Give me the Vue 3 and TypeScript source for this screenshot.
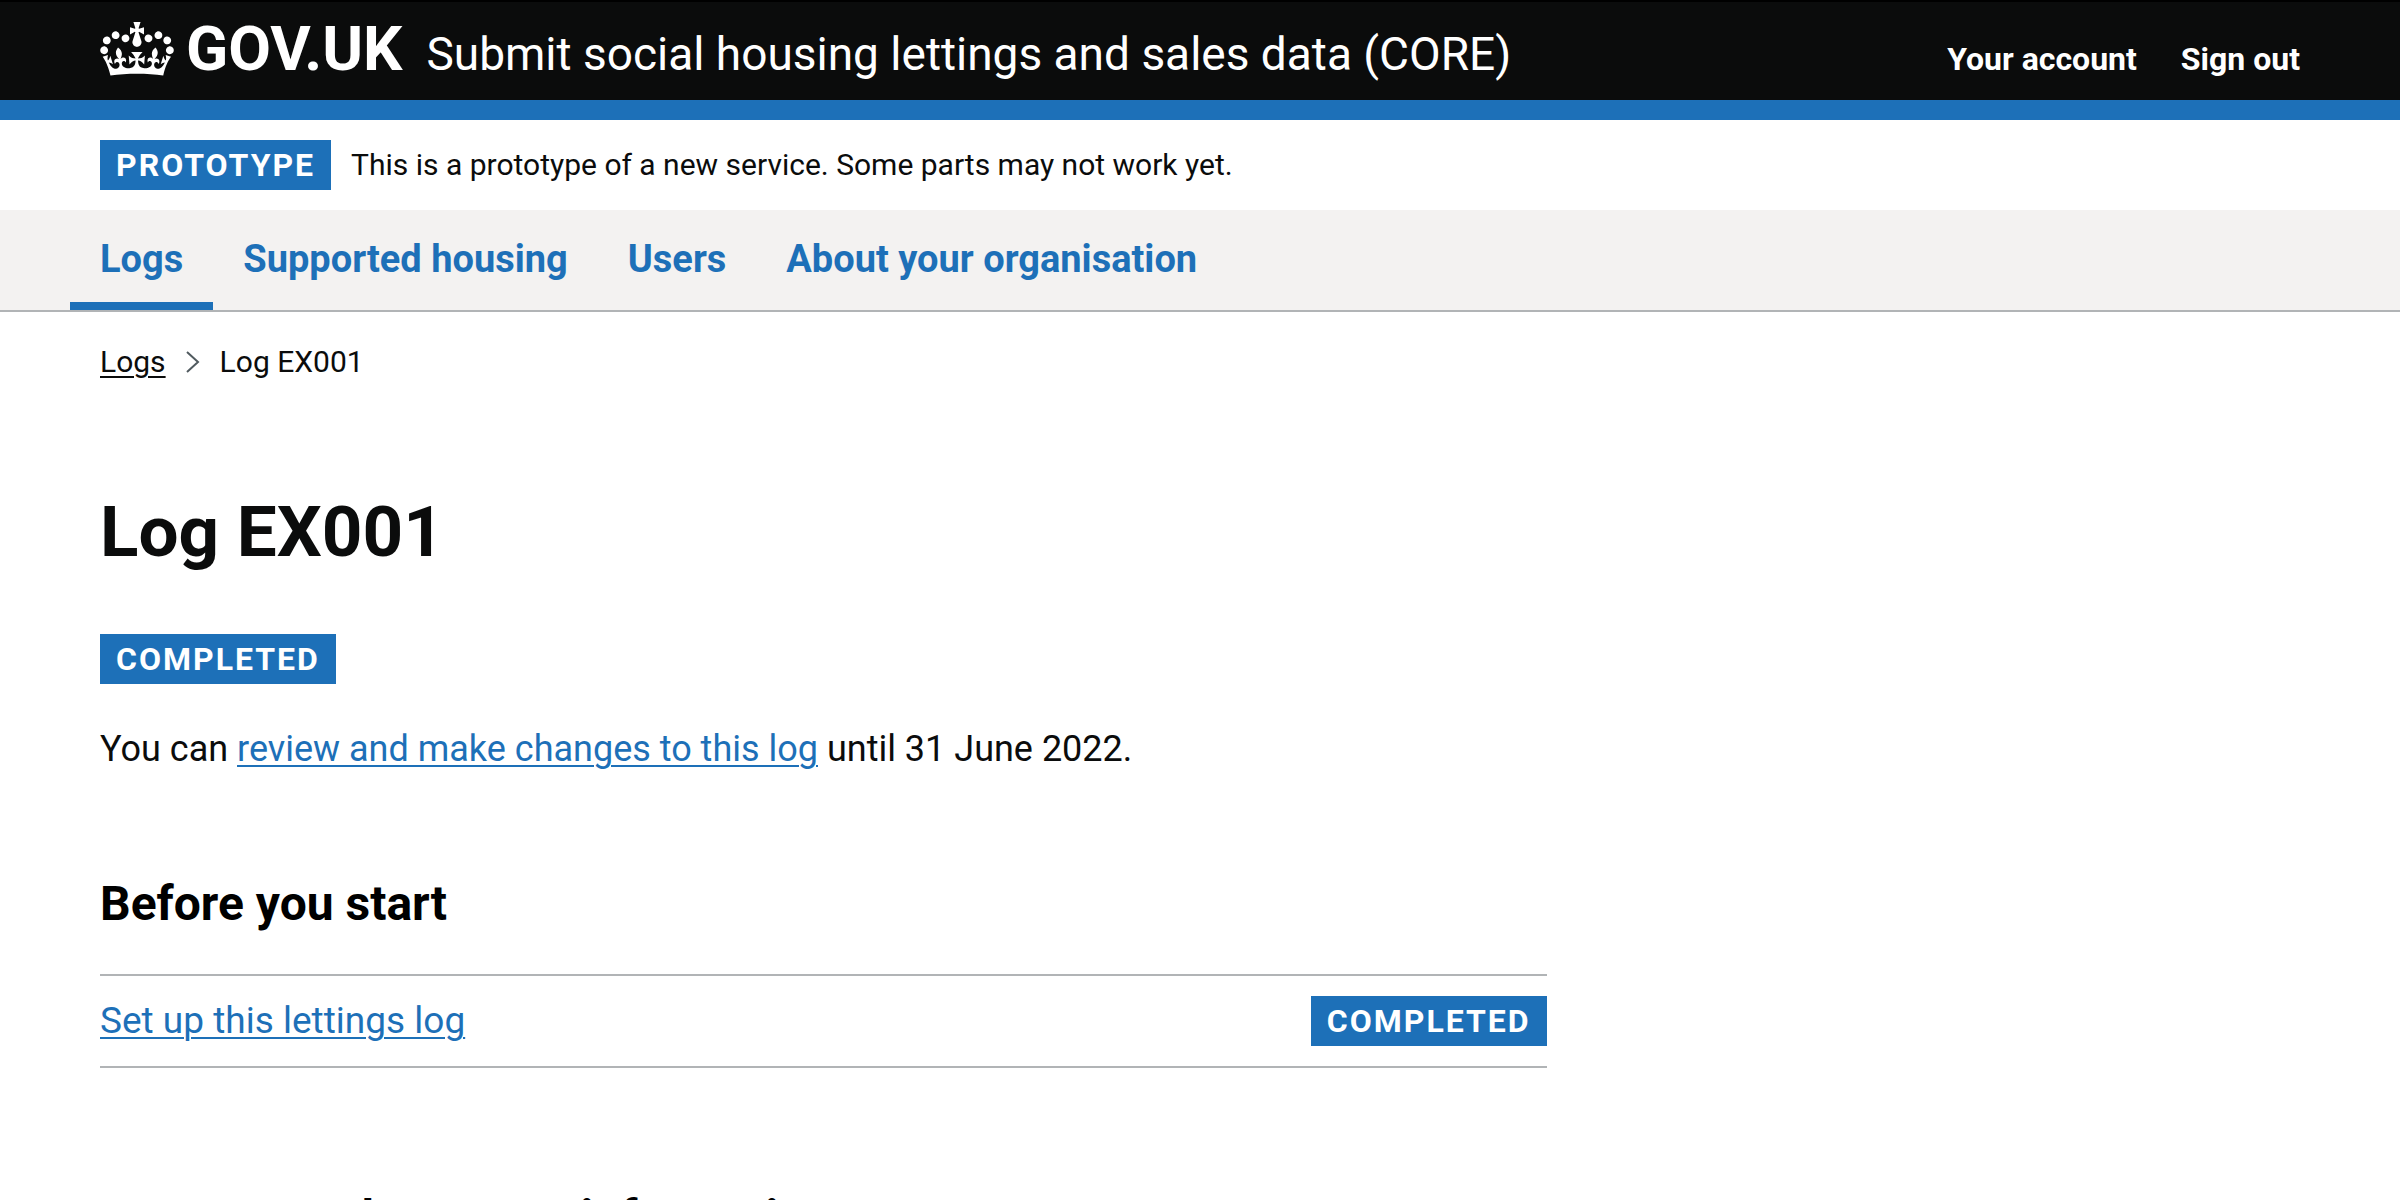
<script setup lang="ts">
interface NavItem {
  label: string
  href: string
  current?: boolean
}

interface Section {
  title: string
  tasks: { label: string; href: string; status: string }[]
}

const accountLinks: NavItem[] = [
  { label: 'Your account', href: '#account' },
  { label: 'Sign out', href: '#sign-out' },
]

const navItems: NavItem[] = [
  { label: 'Logs', href: '#logs', current: true },
  { label: 'Supported housing', href: '#supported-housing' },
  { label: 'Users', href: '#users' },
  { label: 'About your organisation', href: '#organisation' },
]

const sections: Section[] = [
  {
    title: 'Before you start',
    tasks: [{ label: 'Set up this lettings log', href: '#setup', status: 'Completed' }],
  },
  { title: 'Tenancy and property information', tasks: [] },
]
</script>

<template>
  <div class="page">
    <header class="header">
      <div class="header-inner">
        <a class="logo" href="#home">
          <svg class="crown" viewBox="0 0 132 97" aria-hidden="true">
            <path
              fill="currentColor"
              d="M25 30.2c3.5 1.5 7.7-.2 9.1-3.7 1.5-3.6-.2-7.8-3.9-9.2-3.6-1.4-7.6.3-9.1 3.9-1.4 3.5.3 7.5 3.9 9zM9 39.5c3.6 1.5 7.8-.2 9.2-3.7 1.5-3.6-.2-7.8-3.9-9.1-3.6-1.5-7.6.2-9.1 3.8-1.4 3.5.3 7.5 3.8 9zM4.4 57.2c3.5 1.5 7.7-.2 9.1-3.8 1.5-3.6-.2-7.7-3.9-9.1-3.5-1.5-7.6.3-9.1 3.8-1.4 3.5.3 7.6 3.9 9.1zm38.3-21.4c3.5 1.5 7.7-.2 9.1-3.8 1.5-3.6-.2-7.7-3.9-9.1-3.6-1.5-7.6.3-9.1 3.8-1.3 3.6.4 7.7 3.9 9.1zm64.4-5.6c-3.6 1.5-7.8-.2-9.1-3.7-1.5-3.6.2-7.8 3.8-9.2 3.6-1.4 7.7.3 9.2 3.9 1.3 3.5-.4 7.5-3.9 9zm15.9 9.3c-3.6 1.5-7.7-.2-9.1-3.7-1.5-3.6.2-7.8 3.7-9.1 3.6-1.5 7.7.2 9.2 3.8 1.5 3.5-.3 7.5-3.8 9zm4.7 17.7c-3.6 1.5-7.8-.2-9.2-3.8-1.5-3.6.2-7.7 3.9-9.1 3.6-1.5 7.7.3 9.2 3.8 1.3 3.5-.4 7.6-3.9 9.1zM89.3 35.8c-3.6 1.5-7.8-.2-9.2-3.8-1.4-3.6.2-7.7 3.9-9.1 3.6-1.5 7.7.3 9.2 3.8 1.4 3.6-.3 7.7-3.9 9.1zM69.7 17.7l8.9 4.7V9.3l-8.9 2.8c-.2-.3-.5-.6-.9-.9L72.4 0H59.6l3.5 11.2c-.3.3-.6.5-.9.9l-8.8-2.8v13.1l8.8-4.7c.3.3.6.7.9.9l-5 15.4v.1c-.2.8-.4 1.6-.4 2.4 0 4.1 3.1 7.5 7 8.1h.2c.3 0 .7.1 1 .1.4 0 .7 0 1-.1h.2c4-.6 7.1-4.1 7.1-8.1 0-.8-.1-1.7-.4-2.4V34l-5.1-15.4c.4-.2.7-.6 1-.9zM66 92.8c16.9 0 32.8 1.1 47.1 3.2 4-16.9 8.9-26.7 14-33.5l-9.6-3.4c1 4.9 1.1 7.2 0 10.2-1.5-1.4-3-4.3-4.2-8.7L108.6 76c2.8-2 5-3.2 7.5-3.3-4.4 9.4-10 11.9-13.6 11.2-4.3-.8-6.3-4.6-5.6-7.9 1-4.7 5.7-5.9 8-.5 4.3-8.7-3-11.4-7.6-8.8 7.1-7.2 7.9-13.5 2.1-21.1-8 6.1-8.1 12.3-4.5 20.8-4.7-5.4-12.1-2.5-9.5 6.2 3.4-5.2 7.9-2 7.2 3.1-.6 4.3-6.4 7.8-13.5 7.2-10.3-.9-10.9-8-11.2-13.8 2.5-.5 7.1 1.8 11 7.3L80.2 60c-4.1 4.4-8 5.3-12.3 5.4 1.4-4.4 8-11.6 8-11.6H55.5s6.4 7.2 7.9 11.6c-4.2-.1-8-1-12.3-5.4l1.4 16.4c3.9-5.5 8.5-7.7 10.9-7.3-.3 5.8-.9 12.8-11.1 13.8-7.2.6-12.9-2.9-13.5-7.2-.7-5 3.8-8.3 7.1-3.1 2.7-8.7-4.6-11.6-9.4-6.2 3.7-8.5 3.6-14.7-4.6-20.8-5.8 7.6-5 13.9 2.2 21.1-4.7-2.6-11.9.1-7.7 8.8 2.3-5.5 7.1-4.2 8.1.5.7 3.3-1.3 7.1-5.7 7.9-3.5.7-9-1.8-13.5-11.2 2.5.1 4.7 1.3 7.5 3.3l-4.7-15.4c-1.2 4.4-2.7 7.2-4.3 8.7-1.1-3-.9-5.3 0-10.2l-9.5 3.4c5 6.9 9.9 16.7 14 33.5 14.8-2.1 30.8-3.2 47.7-3.2z"
            />
          </svg>
          <span class="logo-text">GOV.UK</span>
        </a>
        <a class="service-name" href="#service">Submit social housing lettings and sales data (CORE)</a>
        <nav class="account" aria-label="Account">
          <a v-for="item in accountLinks" :key="item.label" :href="item.href">{{ item.label }}</a>
        </nav>
      </div>
    </header>

    <div class="phase-banner">
      <strong class="tag">Prototype</strong>
      <span>This is a prototype of a new service. Some parts may not work yet.</span>
    </div>

    <nav class="primary-nav" aria-label="Primary">
      <a
        v-for="item in navItems"
        :key="item.label"
        :href="item.href"
        :class="{ current: item.current }"
        :aria-current="item.current ? 'page' : undefined"
        >{{ item.label }}</a
      >
    </nav>

    <nav class="breadcrumbs" aria-label="Breadcrumb">
      <a href="#logs">Logs</a>
      <svg class="chevron" viewBox="0 0 14 22" aria-hidden="true">
        <path d="M1 1l11 10L1 21" fill="none" stroke="currentColor" stroke-width="2" />
      </svg>
      <span>Log EX001</span>
    </nav>

    <main class="main">
      <div class="two-thirds">
        <h1>Log EX001</h1>
        <strong class="tag">Completed</strong>
        <p>
          You can <a class="link" href="#review">review and make changes to this log</a> until 31 June 2022.
        </p>
        <section v-for="section in sections" :key="section.title">
          <h2>{{ section.title }}</h2>
          <ul v-if="section.tasks.length" class="tasks">
            <li v-for="task in section.tasks" :key="task.label">
              <a class="link" :href="task.href">{{ task.label }}</a>
              <strong class="tag">{{ task.status }}</strong>
            </li>
          </ul>
        </section>
      </div>
    </main>
  </div>
</template>

<style>
body {
  margin: 0;
  background: #fff;
}
</style>

<style scoped>
.page {
  height: 100vh;
  overflow: hidden;
  color: #0b0c0c;
  font-family: Roboto, 'Liberation Sans', sans-serif;
  font-size: 30px;
  line-height: 40px;
}

.header {
  border-top: 2px solid #000;
  border-bottom: 20px solid #1d70b8;
  background: #0b0c0c;
  color: #fff;
}

.header-inner {
  display: flex;
  align-items: baseline;
  height: 98px;
  padding: 0 100px;
  box-sizing: border-box;
}

.header a {
  color: #fff;
  text-decoration: none;
}

.logo {
  display: flex;
  align-items: baseline;
  gap: 12px;
  margin-right: 24px;
}

.crown {
  width: 74px;
  height: 54px;
  align-self: center;
}

.logo-text {
  font-size: 62px;
  font-weight: 700;
  line-height: 94px;
}

.service-name {
  font-size: 46px;
}

.account {
  display: flex;
  gap: 44px;
  margin-left: auto;
  font-size: 32px;
  font-weight: 700;
}

.phase-banner {
  display: flex;
  align-items: center;
  gap: 20px;
  padding: 20px 100px;
}

.tag {
  display: block;
  width: fit-content;
  padding: 5px 16px;
  background: #1d70b8;
  color: #fff;
  font-size: 32px;
  line-height: 40px;
  letter-spacing: 2px;
  text-transform: uppercase;
}

.primary-nav {
  display: flex;
  padding: 0 70px;
  background: #f3f2f1;
  border-bottom: 2px solid #b1b4b6;
  font-size: 38px;
  font-weight: 700;
}

.primary-nav a {
  padding: 24px 30px 18px;
  border-bottom: 8px solid transparent;
  color: #1d70b8;
  line-height: 50px;
  text-decoration: none;
}

.primary-nav .current {
  border-bottom-color: #1d70b8;
}

.breadcrumbs {
  display: flex;
  align-items: center;
  gap: 20px;
  padding: 30px 100px 0;
}

.breadcrumbs a {
  color: inherit;
  text-decoration-thickness: 2px;
  text-underline-offset: 4px;
}

.chevron {
  width: 14px;
  height: 22px;
  color: #505a5f;
}

.main {
  display: grid;
  grid-template-columns: repeat(3, 1fr);
  gap: 60px;
  padding: 108px 100px 0;
  line-height: 50px;
}

.two-thirds {
  grid-column: span 2;
}

h1 {
  margin: 0 0 60px;
  font-size: 71px;
  line-height: 84px;
}

p {
  margin: 40px 0 100px;
  font-size: 36px;
}

h2 {
  margin: 0 0 40px;
  color: #000;
  font-size: 48px;
  line-height: 60px;
}

.link {
  color: #1d70b8;
  text-decoration-thickness: 2px;
  text-underline-offset: 4px;
}

.tasks {
  margin: 0 0 120px;
  padding: 0;
  border-top: 2px solid #b1b4b6;
  font-size: 37px;
  list-style: none;
}

.tasks li {
  display: flex;
  align-items: center;
  justify-content: space-between;
  padding: 20px 0;
  border-bottom: 2px solid #b1b4b6;
}
</style>
